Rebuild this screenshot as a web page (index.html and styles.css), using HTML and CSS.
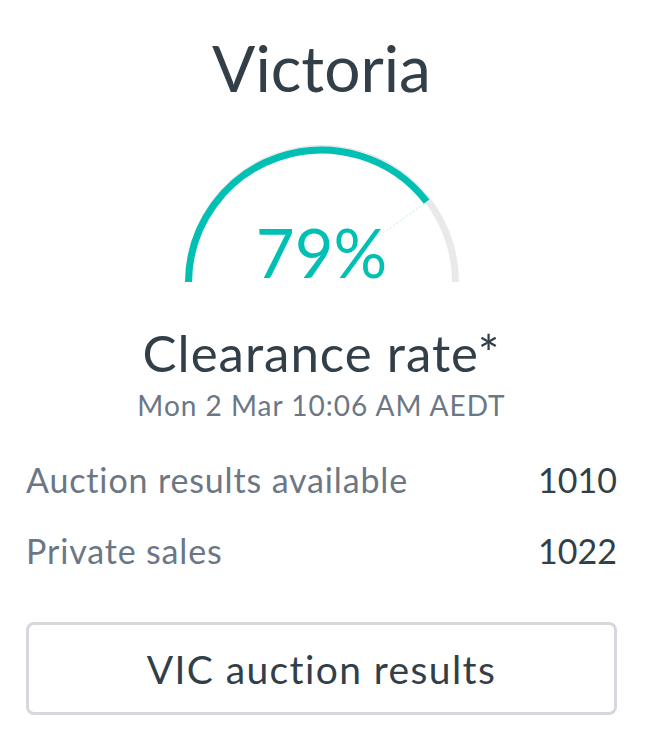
FILE: index.html
```html
<!DOCTYPE html>
<html lang="en">
  <head>
    <meta charset="UTF-8" />
    <meta name="viewport" content="width=device-width, initial-scale=1.0" />
    <title>Victoria clearance rate</title>
    <link rel="stylesheet" href="styles.css">
  </head>
  <body>
    <div class="card">
      <h1 class="state">Victoria</h1>

      <div class="gauge">
        <svg width="290" height="145" viewBox="0 0 290 145">
          <path d="M 11.5 140 A 133 133 0 0 1 278.5 140" fill="none" stroke="#e8e9eb" stroke-width="7" />
          <path d="M 11.5 140 A 133 133 0 0 1 249.6 59.6" fill="none" stroke="#00bfb3" stroke-width="7" />
          <line x1="247" y1="62" x2="196" y2="98" stroke="#00bfb3" stroke-width="1" stroke-dasharray="2 2" opacity="0.25" />
        </svg>
        <div class="gauge-value">79%</div>
      </div>

      <div class="label">Clearance rate*</div>
      <div class="date">Mon 2 Mar 10:06 AM AEDT</div>

      <div class="stats">
        <div class="stat">
          <span class="stat-name">Auction results available</span>
          <span class="stat-num">1010</span>
        </div>
        <div class="stat">
          <span class="stat-name">Private sales</span>
          <span class="stat-num">1022</span>
        </div>
      </div>

      <button class="results-btn">VIC auction results</button>
    </div>
  </body>
</html>
```

FILE: styles.css
```css
body {
  margin: 0;
  font-family: Lato, "Open Sans", sans-serif;
  color: #333f48;
  background: #fff;
}
.card {
  width: 591px;
  margin-left: 26px;
  padding-top: 28px;
  text-align: center;
}
.state {
  margin: 0;
  font-size: 64px;
  font-weight: 400;
  line-height: 80px;
}
.gauge {
  position: relative;
  width: 290px;
  height: 145px;
  margin: 34px auto 0;
}
.gauge svg {
  display: block;
}
.gauge-value {
  position: absolute;
  left: 0;
  right: 0;
  bottom: -5px;
  font-size: 67px;
  line-height: 80px;
  color: #00bfb3;
}
.label {
  margin-top: 38px;
  font-size: 51px;
  line-height: 56px;
  letter-spacing: 1px;
}
.date {
  margin-top: 7px;
  font-size: 28px;
  line-height: 34px;
  letter-spacing: 1px;
  color: #6b7785;
}
.stats {
  margin-top: 37px;
}
.stat {
  display: flex;
  justify-content: space-between;
  align-items: baseline;
  height: 71px;
  font-size: 34px;
  line-height: 42px;
}
.stat-name {
  color: #6b7785;
  letter-spacing: 0.85px;
}
.stat-num {
  color: #333f48;
}
.results-btn {
  display: block;
  width: 100%;
  height: 93px;
  margin-top: 21px;
  border: 3px solid #d5d8dc;
  border-radius: 8px;
  background: #fff;
  font-family: inherit;
  font-size: 39px;
  letter-spacing: 1.4px;
  color: #333f48;
}
```
